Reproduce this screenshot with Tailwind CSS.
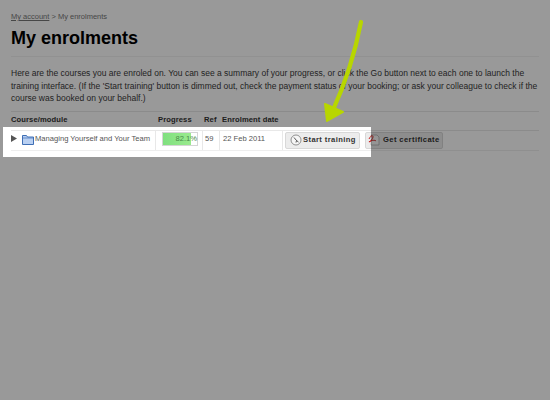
<!DOCTYPE html>
<html><head><meta charset="utf-8"><script src="https://cdn.jsdelivr.net/npm/@tailwindcss/browser@4"></script></head>
<body class="relative w-[550px] h-[400px] overflow-hidden bg-white font-['Liberation_Sans',sans-serif] text-[#333]">
<div class="pl-[11px] pr-[11px] pt-[11px]">
  <div class="text-[7.5px] leading-[11px] text-[#777]"><span class="underline">My account</span> &gt; My enrolments</div>
  <h1 class="mt-[3px] text-[18px] leading-[26px] font-bold text-black">My enrolments</h1>
  <div class="mt-[5px] border-t border-[#f2f2f2] pt-[10px] text-[8.5px] leading-[12.5px] w-[528px] text-[#3a3a3a]">Here are the courses you are enroled on. You can see a summary of your progress, or click the Go button next to each one to launch the training interface. (If the 'Start training' button is dimmed out, check the payment status of your booking; or ask your colleague to check if the course was booked on your behalf.)</div>
  <div class="mt-[6px] border-t border-[#e8e8e8] w-[528px]">
    <div class="flex h-[19px] items-end pb-[4px] text-[7.6px] font-bold tracking-[0.1px] border-b border-[#e8e8e8]">
      <div class="w-[147px]">Course/module</div><div class="w-[46px]">Progress</div><div class="w-[18px]">Ref</div><div>Enrolment date</div>
    </div>
    <div class="relative z-20 flex h-[20px] items-center text-[7.6px] text-[#555] border-b border-[#eee] overflow-visible">
      <div class="flex items-center w-[145px] border-r border-[#e8e8e8] h-full shrink-0">
        <svg width="6" height="7" viewBox="0 0 6 7" class="mr-[5px] -mt-[4px] shrink-0"><path d="M0 0L6 3.5L0 7Z" fill="#555"/></svg>
        <svg width="12" height="11" viewBox="0 0 12 11" class="mr-[1px] -mt-[2px] shrink-0"><path d="M.5 1.5h4l1 1.5h6v7.5h-11z" fill="#b9d0f2" stroke="#3f6fb5"/><path d="M.5 4h11" stroke="#3f6fb5" stroke-width=".7"/></svg>
        <span class="whitespace-nowrap -mt-[2px]">Managing Yourself and Your Team</span>
      </div>
      <div class="flex items-center h-full w-[47px] shrink-0 pl-[6px] border-r border-[#e8e8e8]">
        <div class="relative w-[36px] h-[14px] -mt-[2px] border border-[#d5d5d5] bg-white text-right leading-[12px]"><div class="absolute left-0 top-0 h-full w-[82.1%] bg-gradient-to-r from-[#7fe07f] to-[#9aea8e]"></div><span class="relative text-[#4a8a4a]">82.1%</span></div>
      </div>
      <div class="flex items-center h-full w-[17px] shrink-0 pl-[2px] border-r border-[#e8e8e8]"><span class="-mt-[2px]">59</span></div>
      <div class="flex items-center h-full w-[63px] shrink-0 pl-[3px] border-r border-[#e8e8e8]"><span class="-mt-[2px] whitespace-nowrap">22 Feb 2011</span></div>
      <div class="ml-[2px] flex items-center shrink-0 whitespace-nowrap h-[17px] w-[75px] rounded-[2px] border border-[#d8d8d8] bg-[#ececec] text-[7.6px] font-bold tracking-[0.4px] text-[#333]">
        <svg width="12" height="12" viewBox="0 0 12 12" class="ml-[4px] mr-[1px] shrink-0"><circle cx="6" cy="6" r="5" fill="#f6f6f6" stroke="#777" stroke-width=".8"/><path d="M4 3.5L6.5 6.5L6 8.5M6.5 6.5L8.5 8" stroke="#444" fill="none" stroke-width=".9"/></svg>Start training
      </div>
      <div class="ml-[5px] flex items-center shrink-0 whitespace-nowrap h-[17px] w-[78px] rounded-[2px] border border-[#d8d8d8] bg-[#ececec] text-[7.6px] font-bold tracking-[0.4px] text-[#333]">
        <svg width="12" height="12" viewBox="0 0 12 12" class="ml-[2px] mr-[3px] shrink-0"><path d="M3 1h6l2 2v8H3z" fill="#f8f8f8" stroke="#999" stroke-width=".6"/><path d="M1 5C3 1 5 1 5 3S2 8 1 8 6 5 8 7" fill="none" stroke="#c22" stroke-width="1"/></svg>Get certificate
      </div>
    </div>
  </div>
</div>
<div class="absolute left-[3px] top-[127px] w-[368px] h-[30px] shadow-[0_0_0_1000px_rgba(0,0,0,0.4)] z-30"></div>
<svg class="absolute left-0 top-0 z-40" width="550" height="400" viewBox="0 0 550 400"><path d="M361 22C354 58 344 86 333 110" fill="none" stroke="#b8d600" stroke-width="4.2" stroke-linecap="round"/><path d="M325 104L343 112L327 121Z" fill="#b8d600" stroke="#b8d600" stroke-width="2" stroke-linejoin="round"/></svg>
</body></html>
